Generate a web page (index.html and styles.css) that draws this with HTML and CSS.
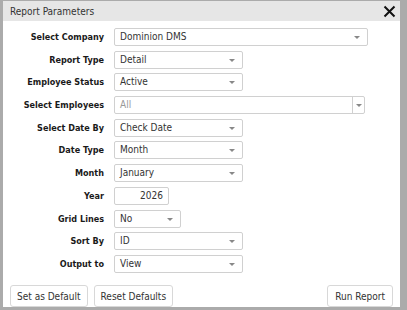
FILE: index.html
```html
<!DOCTYPE html>
<html lang="en">

<head>
    <meta charset="UTF-8">
    <title>Report Parameters</title>
    <link rel="stylesheet" href="styles.css">
</head>

<body>
    <div class="dialog">
        <div class="titlebar">
            <span class="title">Report Parameters</span>
            <svg class="close" width="13" height="13" viewBox="0 0 13 13">
                <path d="M1.5 1.5 L11.5 11.5 M11.5 1.5 L1.5 11.5" stroke="#111" stroke-width="2" />
            </svg>
        </div>

        <div class="form">
            <div class="row">
                <label>Select Company</label>
                <div class="select w-wide">Dominion DMS<span class="arrow"></span></div>
            </div>
            <div class="row">
                <label>Report Type</label>
                <div class="select">Detail<span class="arrow"></span></div>
            </div>
            <div class="row">
                <label>Employee Status</label>
                <div class="select">Active<span class="arrow"></span></div>
            </div>
            <div class="row">
                <label>Select Employees</label>
                <div class="select w-multi muted">All<span class="arrow split"></span></div>
            </div>
            <div class="row">
                <label>Select Date By</label>
                <div class="select">Check Date<span class="arrow"></span></div>
            </div>
            <div class="row">
                <label>Date Type</label>
                <div class="select">Month<span class="arrow"></span></div>
            </div>
            <div class="row">
                <label>Month</label>
                <div class="select">January<span class="arrow"></span></div>
            </div>
            <div class="row">
                <label>Year</label>
                <div class="input w-year">2026</div>
            </div>
            <div class="row">
                <label>Grid Lines</label>
                <div class="select w-small">No<span class="arrow"></span></div>
            </div>
            <div class="row">
                <label>Sort By</label>
                <div class="select">ID<span class="arrow"></span></div>
            </div>
            <div class="row">
                <label>Output to</label>
                <div class="select">View<span class="arrow"></span></div>
            </div>
        </div>

        <div class="buttons">
            <button>Set as Default</button>
            <button>Reset Defaults</button>
            <button class="run">Run Report</button>
        </div>
    </div>
</body>

</html>
```

FILE: styles.css
```css
body {
    margin: 0;
    height: 310px;
    background: #ababab;
    font-family: "DejaVu Sans Condensed", "DejaVu Sans", sans-serif;
    color: #333;
}

.dialog {
    margin: 1px 7px 0 3px;
    height: 306px;
    background: #fff;
    display: flex;
    flex-direction: column;
}

.titlebar {
    height: 20px;
    background: #e6e6e6;
    display: flex;
    align-items: center;
    justify-content: space-between;
    padding: 0 4px 0 7px;
}

.title {
    font-size: 10px;
}

.form {
    display: flex;
    flex-direction: column;
    gap: 4.7px;
    padding-top: 7px;
}

.row {
    display: flex;
    align-items: center;
    gap: 10px;
    height: 18px;
}

.row label {
    width: 101px;
    text-align: right;
    font-size: 9px;
    font-weight: bold;
    color: #1a1a1a;
}

.select,
.input {
    position: relative;
    box-sizing: border-box;
    height: 18px;
    width: 129px;
    border: 1px solid #d0d0d0;
    border-radius: 2px;
    font-size: 10px;
    line-height: 16px;
    padding-left: 5px;
}

.w-wide {
    width: 254px;
}

.w-multi {
    width: 251px;
}

.w-small {
    width: 67px;
}

.w-year {
    width: 55px;
    text-align: right;
    padding-right: 5px;
}

.muted {
    color: #999;
}

.arrow {
    position: absolute;
    right: 7px;
    top: 7px;
    border-left: 3px solid transparent;
    border-right: 3px solid transparent;
    border-top: 3px solid #888;
}

.arrow.split {
    right: 0;
    top: 0;
    width: 11px;
    height: 16px;
    border: none;
    border-left: 1px solid #d0d0d0;
}

.arrow.split::after {
    content: "";
    position: absolute;
    left: 3px;
    top: 7px;
    border-left: 3px solid transparent;
    border-right: 3px solid transparent;
    border-top: 3px solid #888;
}

.buttons {
    margin-top: auto;
    display: flex;
    gap: 6px;
    padding: 0 7px 0 7px;
}

button {
    height: 22px;
    padding: 0 6px;
    background: #fff;
    border: 1px solid #d8d8d8;
    border-radius: 3px;
    font-family: "DejaVu Sans Condensed", "DejaVu Sans", sans-serif;
    font-size: 10px;
    color: #333;
}

.run {
    margin-left: auto;
    padding: 0 7px;
}
```
